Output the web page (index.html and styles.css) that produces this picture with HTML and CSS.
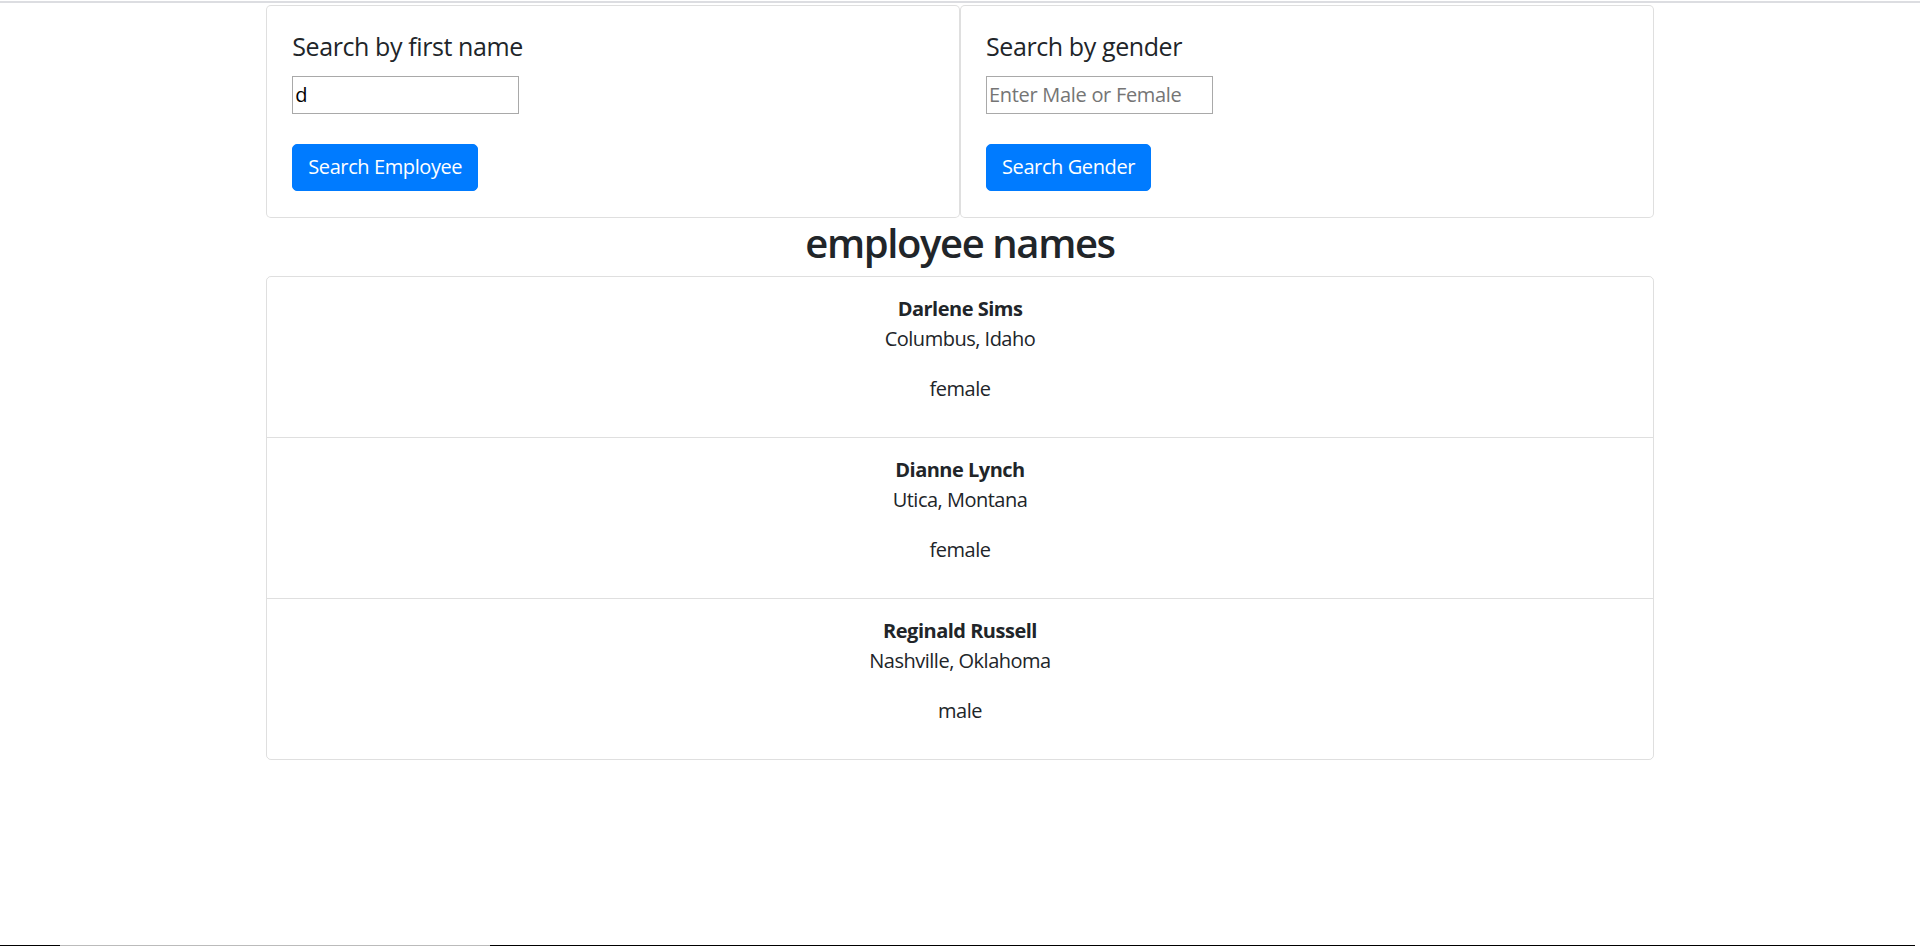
FILE: index.html
```html
<!DOCTYPE html>
<html lang="en">
<head>
<meta charset="utf-8">
<title>Employee Directory</title>
<link rel="stylesheet" href="styles.css">
</head>
<body>
<div class="page">
  <div class="topline"></div>
  <main class="container">
    <div class="row">
      <div class="card">
        <div class="card-body">
          <h5 class="card-title">Search by first name</h5>
          <input class="field" type="text" value="d">
          <div class="actions"><button class="btn">Search Employee</button></div>
        </div>
      </div>
      <div class="card">
        <div class="card-body">
          <h5 class="card-title">Search by gender</h5>
          <input class="field" type="text" placeholder="Enter Male or Female">
          <div class="actions"><button class="btn">Search Gender</button></div>
        </div>
      </div>
    </div>
    <h2 class="heading">employee names</h2>
    <ul class="list-group">
      <li class="list-item">
        <p class="info"><strong>Darlene Sims</strong><br>Columbus, Idaho</p>
        <p class="gender">female</p>
      </li>
      <li class="list-item">
        <p class="info"><strong>Dianne Lynch</strong><br>Utica, Montana</p>
        <p class="gender">female</p>
      </li>
      <li class="list-item">
        <p class="info"><strong>Reginald Russell</strong><br>Nashville, Oklahoma</p>
        <p class="gender">male</p>
      </li>
    </ul>
  </main>
  <div class="bottomline">
    <span class="seg-dark seg-a"></span><span class="seg-gray"></span><span class="seg-dark seg-b"></span>
  </div>
</div>
</body>
</html>
```
FILE: styles.css
```css
* { box-sizing: border-box; }
html, body { margin: 0; padding: 0; }
body {
  font-family: "Open Sans", "Noto Sans", "Liberation Sans", sans-serif;
  font-size: 20px;
  line-height: 1.5;
  color: #212529;
  background: #fff;
}
.page {
  min-height: 946px;
  display: flex;
  flex-direction: column;
}
.topline {
  margin-top: 1px;
  height: 2px;
  background: #dcdde1;
}
.container {
  width: 1387.5px;
  margin: 1.5px auto 0;
}
.row {
  display: flex;
}
.card {
  flex: 1 1 0;
  border: 1.25px solid rgba(0,0,0,.125);
  border-radius: 5px;
  background: #fff;
}
.card-body {
  padding: 25px 25px 26px;
}
.card-title {
  margin: 0 0 15px;
  font-size: 25px;
  font-weight: 500;
  line-height: 1.2;
  letter-spacing: -0.4px;
}
.field {
  display: block;
  width: 227px;
  height: 38px;
  margin: 0;
  padding: 1px 2px;
  border: 1px solid #a9a9a9;
  font-family: inherit;
  font-size: 20px;
  color: #000;
  letter-spacing: -0.3px;
}
.field::placeholder { color: #757575; }
.actions {
  margin-top: 30px;
}
.btn {
  display: inline-block;
  padding: 7.5px 15px;
  border: 1.25px solid #007bff;
  border-radius: 5px;
  background: #007bff;
  color: #fff;
  font-family: inherit;
  font-size: 20px;
  line-height: 1.5;
  letter-spacing: -0.4px;
}
.heading {
  margin: 0 0 10px;
  padding-top: 2px;
  text-align: center;
  font-size: 40px;
  font-weight: 600;
  line-height: 1.15;
  letter-spacing: -1.4px;
}
.list-group {
  list-style: none;
  margin: 0;
  padding: 0;
  border: 1.25px solid rgba(0,0,0,.125);
  border-radius: 5px;
}
.list-item {
  padding: 17px 25px 13px;
  text-align: center;
  border-top: 1.25px solid rgba(0,0,0,.125);
  letter-spacing: -0.5px;
}
.list-item:first-child { border-top: 0; }
.info, .gender {
  margin: 0 0 20px;
}
.info strong { font-weight: 700; }
.bottomline {
  margin-top: auto;
  height: 1px;
  display: flex;
}
.seg-dark { background: #000; }
.seg-a { width: 60px; }
.seg-gray { width: 430px; background: #bbb; }
.seg-b { width: 1425px; }
```
